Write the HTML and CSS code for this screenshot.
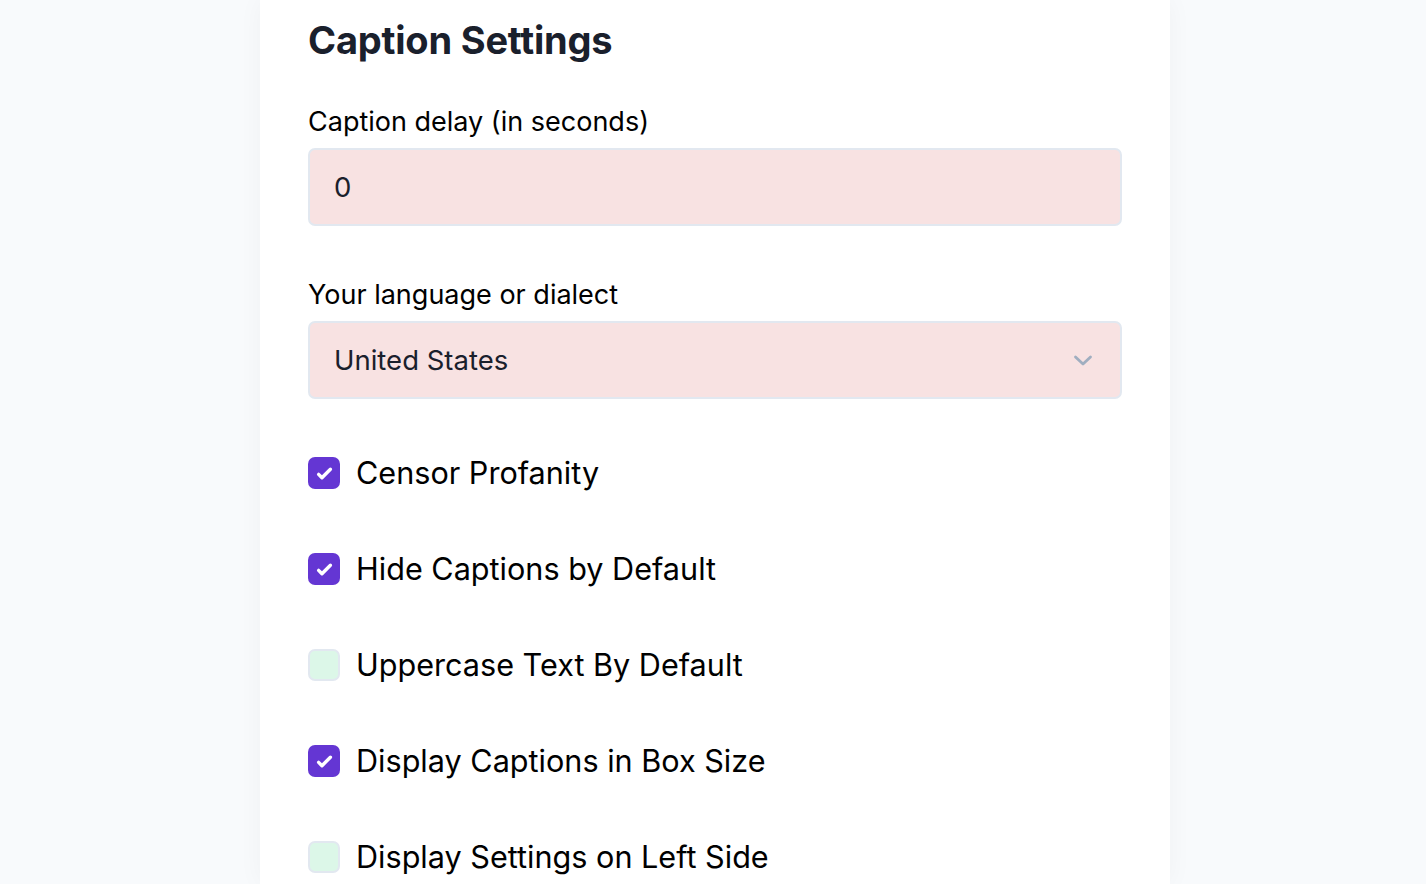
FILE: index.html
```html
<!DOCTYPE html>
<html lang="en">
<head>
<meta charset="utf-8">
<title>Caption Settings</title>
<link rel="stylesheet" href="styles.css">
</head>
<body>
<main class="card">
  <h1 class="title">Caption Settings</h1>

  <div class="field">
    <label class="label" for="delay">Caption delay (in seconds)</label>
    <div class="input">0</div>
  </div>

  <div class="field">
    <label class="label" for="lang">Your language or dialect</label>
    <div class="input select">
      <span>United States</span>
      <svg class="chev" viewBox="0 0 20 11" width="20" height="11" aria-hidden="true">
        <path d="M2.5 2l7.5 7 7.5-7" fill="none" stroke="#a0aec0" stroke-width="2.8" stroke-linecap="round" stroke-linejoin="round"/>
      </svg>
    </div>
  </div>

  <ul class="options">
    <li class="option"><span class="box on"><svg viewBox="0 0 16 16" width="27" height="27"><path fill="#fff" d="M12.207 4.793a1 1 0 010 1.414l-5 5a1 1 0 01-1.414 0l-2-2a1 1 0 011.414-1.414L6.5 9.086l4.293-4.293a1 1 0 011.414 0z"/></svg></span><span class="opt-text">Censor Profanity</span></li>
    <li class="option"><span class="box on"><svg viewBox="0 0 16 16" width="27" height="27"><path fill="#fff" d="M12.207 4.793a1 1 0 010 1.414l-5 5a1 1 0 01-1.414 0l-2-2a1 1 0 011.414-1.414L6.5 9.086l4.293-4.293a1 1 0 011.414 0z"/></svg></span><span class="opt-text">Hide Captions by Default</span></li>
    <li class="option"><span class="box off"></span><span class="opt-text">Uppercase Text By Default</span></li>
    <li class="option"><span class="box on"><svg viewBox="0 0 16 16" width="27" height="27"><path fill="#fff" d="M12.207 4.793a1 1 0 010 1.414l-5 5a1 1 0 01-1.414 0l-2-2a1 1 0 011.414-1.414L6.5 9.086l4.293-4.293a1 1 0 011.414 0z"/></svg></span><span class="opt-text">Display Captions in Box Size</span></li>
    <li class="option"><span class="box off"></span><span class="opt-text">Display Settings on Left Side</span></li>
  </ul>
</main>
</body>
</html>
```

FILE: styles.css
```css
html, body {
  margin: 0;
  padding: 0;
  background: #f8fafc;
  height: 884px;
  overflow: hidden;
  font-family: Inter, "Liberation Sans", sans-serif;
}

.card {
  box-sizing: border-box;
  width: 910px;
  margin-left: 260px;
  min-height: 884px;
  background: #ffffff;
  padding: 14px 48px 0 48px;
  box-shadow: 0 0 24px rgba(15, 23, 42, 0.04);
}

.title {
  margin: 0 0 38px 0;
  font-size: 38px;
  line-height: 52px;
  font-weight: 700;
  color: #1a202c;
  letter-spacing: -0.2px;
}

.field {
  display: flex;
  flex-direction: column;
  gap: 8px;
  margin-bottom: 51px;
}

.label {
  font-size: 27px;
  line-height: 36px;
  color: #000000;
}

.input {
  box-sizing: border-box;
  height: 78px;
  display: flex;
  align-items: center;
  padding: 0 24px;
  background: #f8e2e2;
  border: 2px solid #e2e8f0;
  border-radius: 7px;
  font-size: 27.5px;
  color: #1a202c;
}

.select {
  justify-content: space-between;
  padding-right: 27px;
}

.chev {
  display: block;
}

.options {
  list-style: none;
  margin: 0;
  padding: 7px 0 0 0;
  display: flex;
  flex-direction: column;
  gap: 64px;
}

.option {
  display: flex;
  align-items: center;
  gap: 16px;
  height: 32px;
}

.box {
  box-sizing: border-box;
  width: 32px;
  height: 32px;
  border-radius: 7px;
  display: flex;
  align-items: center;
  justify-content: center;
  flex: none;
}

.box.on {
  background: #6436d3;
}

.box.off {
  background: #dcf7e8;
  border: 2px solid #e2e8f0;
}

.opt-text {
  font-size: 30.6px;
  line-height: 40px;
  color: #000000;
}
```
